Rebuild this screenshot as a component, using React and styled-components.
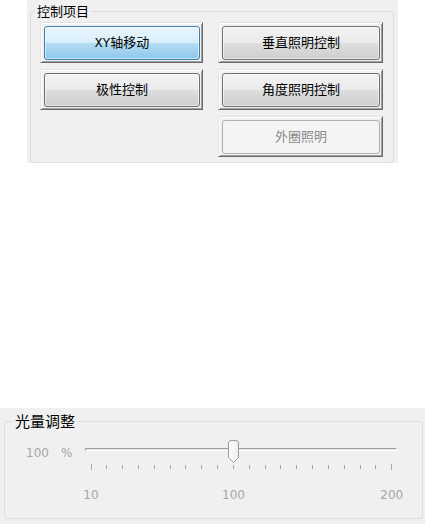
import React from "react";
import styled, { createGlobalStyle } from "styled-components";

const GlobalStyle = createGlobalStyle`
  html, body { margin: 0; padding: 0; background: #fff; }
  body { font-family: "Noto Sans CJK SC", "Liberation Sans", sans-serif; }
  *, *::before, *::after { box-sizing: border-box; }
`;

const Page = styled.div`
  width: 427px;
  height: 524px;
  display: flex;
  flex-direction: column;
  overflow: hidden;
`;

const TopPanel = styled.section`
  margin-left: 27px;
  width: 371px;
  height: 163px;
  background: #f0f0f0;
  padding: 3px 4px 0 3px;
  display: flex;
`;

const BottomPanel = styled.section`
  margin-top: 245px;
  width: 425px;
  height: 116px;
  background: #f0f0f0;
  padding: 4px 2px 5px 4px;
  display: flex;
`;

const GroupBox = styled.fieldset`
  flex: 1;
  margin: 0;
  padding: 0;
  min-width: 0;
  border: 1px solid #d5dfe5;
  border-radius: 3px;
`;

const Legend = styled.legend`
  margin-left: ${(p) => p.$offset}px;
  padding: 0 2px;
  font-family: "Noto Sans CJK SC", sans-serif;
  font-size: ${(p) => p.$size}px;
  line-height: ${(p) => p.$lh}px;
  color: #000;
`;

const ButtonGrid = styled.div`
  display: grid;
  grid-template-columns: 163px 165px;
  grid-auto-rows: 41px;
  gap: 6px 15px;
  padding: 3px 0 0 9px;
`;

const ButtonFrame = styled.div`
  grid-column: ${(p) => p.$col || "auto"};
  display: flex;
  padding: 2px 1px 1px 2px;
  border-top: 1px solid #e3e3e3;
  border-left: 1px solid #e3e3e3;
  border-right: 1px solid #696969;
  border-bottom: 1px solid #696969;
  box-shadow: inset 1px 1px 0 #fff, inset -1px -1px 0 #a0a0a0;
  background: #f0f0f0;
`;

const Button = styled.button`
  flex: 1;
  margin: 1px 1px 1px 1px;
  border-radius: 3px;
  font-family: "Liberation Mono", "Noto Sans CJK SC", monospace;
  font-size: 13px;
  line-height: 1;
  padding: 0;
  cursor: default;
  color: ${(p) => (p.disabled ? "#8a8a8a" : "#000")};
  border: 1px solid
    ${(p) => (p.$active ? "#3c7fb1" : p.disabled ? "#adb2b5" : "#707070")};
  background: ${(p) =>
    p.$active
      ? "linear-gradient(#e8f5fc 0%, #d9effb 48%, #b3dcf3 52%, #8ec7ea 100%)"
      : p.disabled
      ? "#f4f4f4"
      : "linear-gradient(#f2f2f2 0%, #ebebeb 48%, #dddddd 52%, #cfcfcf 100%)"};
  box-shadow: inset 0 0 0 1px
    ${(p) => (p.disabled ? "transparent" : "rgba(255,255,255,0.55)")};
`;

const SliderLayout = styled.div`
  display: grid;
  grid-template-columns: 80px 312px;
  align-items: start;
`;

const ValueLabel = styled.div`
  display: flex;
  gap: 12px;
  padding: 16px 0 0 21px;
  font-family: "DejaVu Sans", sans-serif;
  font-size: 12px;
  line-height: 14px;
  color: #a6a6a6;
`;

const TrackArea = styled.div`
  position: relative;
  padding-top: 18px;
`;

const Channel = styled.div`
  height: 3px;
  border-top: 1px solid #a0a0a0;
  border-left: 1px solid #a0a0a0;
  border-bottom: 1px solid #fff;
  border-right: 1px solid #fff;
  background: #e4e4e4;
`;

const ThumbWrap = styled.div`
  position: absolute;
  top: 10px;
  width: 13px;
  height: 24px;
  display: flex;
`;

const TickGrid = styled.div`
  display: grid;
  grid-template-columns: repeat(${(p) => p.$count}, ${(p) => p.$step}px);
  grid-template-rows: 6px 14px;
  row-gap: 18px;
  margin: 13px 0 0 -1.92px;
`;

const Tick = styled.span`
  grid-row: 1;
  justify-self: center;
  width: 1px;
  height: ${(p) => (p.$long ? 6 : 4)}px;
  margin-top: ${(p) => (p.$long ? 0 : 1)}px;
  background: #a8a8a8;
`;

const TickLabel = styled.span`
  grid-row: 2;
  grid-column: ${(p) => p.$col};
  justify-self: center;
  white-space: nowrap;
  font-family: "DejaVu Sans", sans-serif;
  font-size: 12px;
  line-height: 14px;
  color: #a6a6a6;
`;

const Thumb = () => (
  <svg width="13" height="24" viewBox="0 0 13 24">
    <defs>
      <linearGradient id="tg" x1="0" y1="0" x2="1" y2="0">
        <stop offset="0" stopColor="#ffffff" />
        <stop offset="1" stopColor="#ececec" />
      </linearGradient>
    </defs>
    <path
      d="M1.5 3 Q1.5 0.5 4 0.5 H9 Q11.5 0.5 11.5 3 V17.5 L6.5 22.5 L1.5 17.5 Z"
      fill="url(#tg)"
      stroke="#9c9c9c"
    />
  </svg>
);

const buttons = [
  { label: "XY轴移动", active: true },
  { label: "垂直照明控制" },
  { label: "极性控制" },
  { label: "角度照明控制" },
  { label: "外圈照明", disabled: true, col: 2 },
];

const MIN = 10;
const MAX = 200;
const VALUE = 100;
const TICK_SPAN = 301;
const TICK_COUNT = (MAX - MIN) / 10 + 1;
const STEP = TICK_SPAN / (TICK_COUNT - 1);
const labels = [10, 100, 200];

export default function App() {
  const thumbLeft = 6 + ((VALUE - MIN) / (MAX - MIN)) * TICK_SPAN - 6.5;
  return (
    <Page>
      <GlobalStyle />
      <TopPanel>
        <GroupBox>
          <Legend $offset={4} $size={13} $lh={16}>控制项目</Legend>
          <ButtonGrid>
            {buttons.map((b) => (
              <ButtonFrame key={b.label} $col={b.col}>
                <Button $active={b.active} disabled={b.disabled}>
                  {b.label}
                </Button>
              </ButtonFrame>
            ))}
          </ButtonGrid>
        </GroupBox>
      </TopPanel>
      <BottomPanel>
        <GroupBox>
          <Legend $offset={8} $size={15} $lh={18}>光量调整</Legend>
          <SliderLayout>
            <ValueLabel>
              <span>{VALUE}</span>
              <span>%</span>
            </ValueLabel>
            <TrackArea>
              <Channel />
              <ThumbWrap style={{ left: `${thumbLeft}px` }}>
                <Thumb />
              </ThumbWrap>
              <TickGrid $count={TICK_COUNT} $step={STEP}>
                {Array.from({ length: TICK_COUNT }, (_, i) => (
                  <Tick key={i} $long={i === 0 || i === TICK_COUNT - 1} />
                ))}
                {labels.map((v) => (
                  <TickLabel key={v} $col={(v - MIN) / 10 + 1}>
                    {v}
                  </TickLabel>
                ))}
              </TickGrid>
            </TrackArea>
          </SliderLayout>
        </GroupBox>
      </BottomPanel>
    </Page>
  );
}
